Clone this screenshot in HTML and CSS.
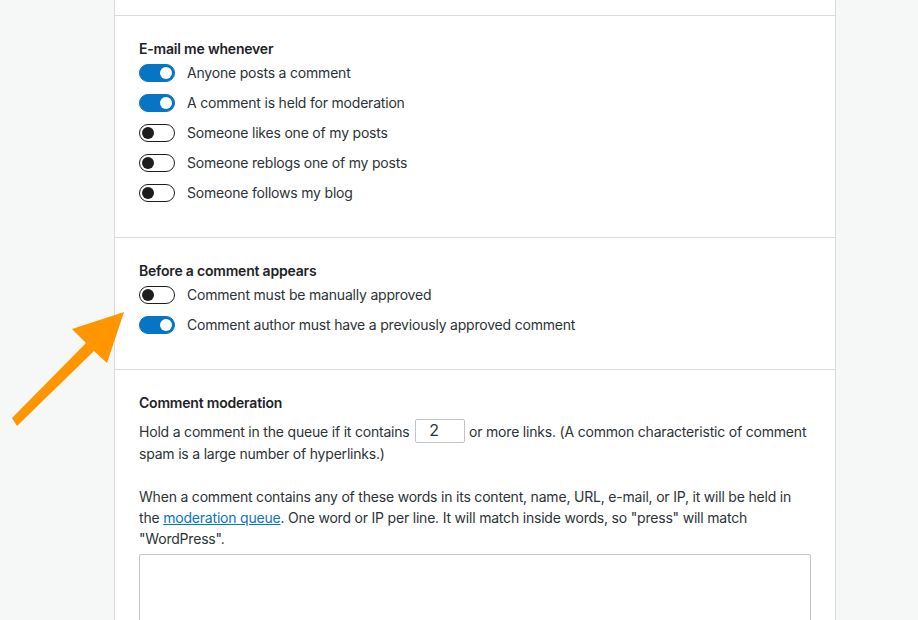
FILE: index.html
```html
<!DOCTYPE html>
<html lang="en">
<head>
<meta charset="utf-8">
<title>Discussion settings</title>
<link rel="stylesheet" href="styles.css">
</head>
<body>
<div class="page">
  <div class="card">
    <div class="section section-top"></div>
    <div class="section">
      <div class="legend">E-mail me whenever</div>
      <div class="row"><span class="toggle on"></span><span>Anyone posts a comment</span></div>
      <div class="row"><span class="toggle on"></span><span>A comment is held for moderation</span></div>
      <div class="row"><span class="toggle"></span><span>Someone likes one of my posts</span></div>
      <div class="row"><span class="toggle"></span><span>Someone reblogs one of my posts</span></div>
      <div class="row"><span class="toggle"></span><span>Someone follows my blog</span></div>
    </div>
    <div class="section">
      <div class="legend">Before a comment appears</div>
      <div class="row"><span class="toggle"></span><span>Comment must be manually approved</span></div>
      <div class="row"><span class="toggle on"></span><span>Comment author must have a previously approved comment</span></div>
    </div>
    <div class="section last">
      <div class="legend legend-mod">Comment moderation</div>
      <p class="text first">Hold a comment in the queue if it contains <span class="num">2</span> or more links. (A common characteristic of comment spam is a large number of hyperlinks.)</p>
      <p class="text second">When a comment contains any of these words in its content, name, URL, e-mail, or IP, it will be held in the <a href="#">moderation queue</a>. One word or IP per line. It will match inside words, so "press" will match "WordPress".</p>
      <div class="textarea"></div>
    </div>
  </div>
  <svg class="arrow" width="130" height="130" viewBox="0 0 130 130">
    <polygon fill="#ff9600" points="124,12 107,63 94,51 17,126 12,118 86,43 72,29"/>
  </svg>
</div>
</body>
</html>
```
FILE: styles.css
```css
html, body {
  margin: 0;
  padding: 0;
  background: #f6f7f7;
}
body {
  font-family: Inter, "Noto Sans", "Liberation Sans", sans-serif;
  font-size: 14px;
  letter-spacing: -0.2px;
  color: #2c3338;
  overflow: hidden;
  height: 620px;
}
.page {
  position: relative;
  height: 620px;
}
.card {
  margin-left: 114px;
  width: 720px;
  background: #fff;
  border-left: 1px solid #dcdcde;
  border-right: 1px solid #dcdcde;
  height: 620px;
}
.section {
  padding: 23px 24px 34px;
  border-bottom: 1px solid #dcdcde;
}
.section-top {
  height: 15px;
  padding: 0;
}
.section.last {
  border-bottom: none;
  padding-bottom: 0;
}
.legend {
  font-weight: 600;
  line-height: 20px;
  color: #1d2327;
  margin-bottom: 4px;
}
.legend-mod {
  margin-bottom: 8px;
}
.row {
  display: flex;
  align-items: center;
  gap: 12px;
  height: 20px;
  margin-bottom: 10px;
}
.row span:last-child {
  position: relative;
  top: -1px;
}
.row:last-child {
  margin-bottom: 0;
}
.toggle {
  position: relative;
  flex: none;
  width: 36px;
  height: 18px;
  box-sizing: border-box;
  border: 1px solid #1e1e1e;
  border-radius: 9px;
  background: #fff;
}
.toggle::after {
  content: "";
  position: absolute;
  top: 2px;
  left: 2px;
  width: 12px;
  height: 12px;
  border-radius: 50%;
  background: #1e1e1e;
}
.toggle.on {
  background: #0675c4;
  border-color: #0675c4;
}
.toggle.on::after {
  left: auto;
  right: 2px;
  background: #fff;
}
.text {
  margin: 0;
  line-height: 21px;
}
.text.first {
  line-height: 22px;
}
.text.second {
  margin-top: 21px;
  margin-bottom: 5px;
}
.num {
  display: inline-block;
  box-sizing: border-box;
  width: 50px;
  height: 24px;
  border: 1px solid #c3c4c7;
  border-radius: 2px;
  padding-left: 13px;
  font-size: 16px;
  line-height: 21px;
  vertical-align: bottom;
  margin: -2px 0 0 2px;
  color: #2c3338;
}
a {
  color: #0675c4;
  text-decoration: underline;
}
.textarea {
  height: 120px;
  border: 1px solid #c3c4c7;
  border-radius: 2px;
}
.arrow {
  position: absolute;
  left: 0;
  top: 300px;
}
```
